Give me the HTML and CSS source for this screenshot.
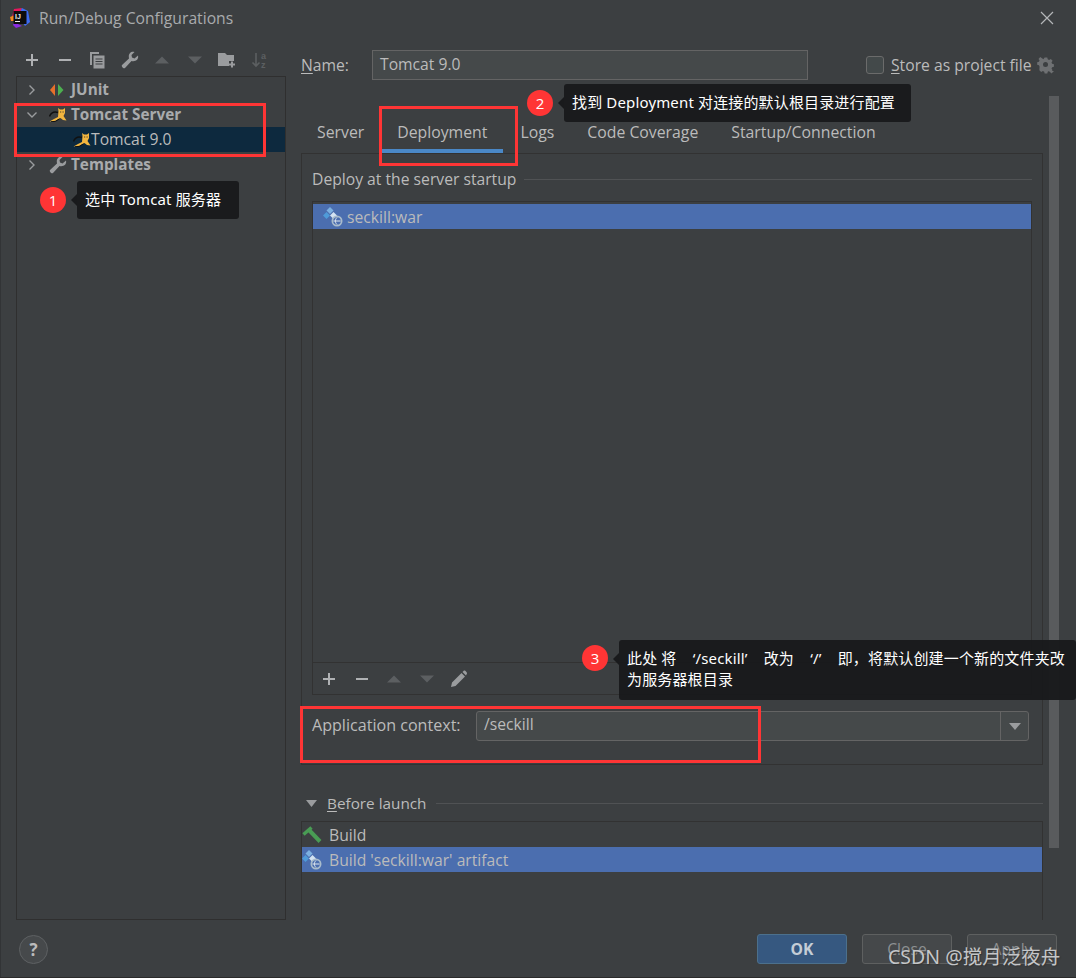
FILE: index.html
```html
<!DOCTYPE html>
<html lang="en">
<head>
<meta charset="utf-8">
<title>Run/Debug Configurations</title>
<link rel="stylesheet" href="styles.css">
</head>
<body>
<svg class="defs" width="0" height="0" aria-hidden="true">
  <defs>
    <symbol id="cat" viewBox="0 0 18 14">
      <path d="M0.500 8.500 C2 4.500 5 3 9.500 4.500" fill="none" stroke="#111" stroke-width="1.500"/>
      <path d="M0.500 13.500 L5 11 L9 9 L9.500 3 L9 0 L11 1.500 L14 1.500 L16 0 L16 5 L14.500 8 L17.500 12.500 L14 12 L11.500 10 L6 13Z" fill="#f3b63f"/>
      <path d="M2 13.800 L6.500 13.300 L10.500 10.800" fill="none" stroke="#111" stroke-width="1"/>
      <path d="M11.200 3.500h1v1h-1zM13.600 3.500h1v1h-1z" fill="#2a2a2a"/>
    </symbol>
    <symbol id="artifact" viewBox="0 0 20 20">
      <path d="M7 0 L10.500 3.500 L7 7 L3.500 3.500Z" fill="#7cb0e0"/>
      <path d="M3.500 5 L7 8.500 L3.500 12 L0 8.500Z" fill="#4f9bd9"/>
      <path d="M10.500 5 L14 8.500 L10.500 12 L7 8.500Z" fill="#d3e3f2"/>
      <circle cx="14" cy="14" r="5.500" fill="#a9bccc"/>
      <circle cx="14" cy="14" r="3.800" fill="#4b6eaf"/>
      <path d="M10.500 14h7M14 10.500c-2.200 2.200-2.200 4.800 0 7" fill="none" stroke="#dfe7ef" stroke-width="1"/>
    </symbol>
    <symbol id="plus" viewBox="0 0 14 14"><path d="M7 1v12M1 7h12" stroke="#afb1b3" stroke-width="2" fill="none"/></symbol>
    <symbol id="minus" viewBox="0 0 14 14"><path d="M1 7h12" stroke="#afb1b3" stroke-width="2" fill="none"/></symbol>
    <symbol id="up" viewBox="0 0 16 10"><path d="M8 1.500 L15 8.500H1Z" fill="#5c5f61"/></symbol>
    <symbol id="down" viewBox="0 0 16 10"><path d="M8 8.500 L15 1.500H1Z" fill="#5c5f61"/></symbol>
    <symbol id="wrench" viewBox="0 0 18 18"><path d="M17 4.500 L13.500 7.500 L11 6.500 L10.500 4 L13.500 1 C10.500 0 7.500 2 7.800 6 L8 7.500 L1 14 C0 15.500 2.500 18 4 17 L10.500 10 C14.500 11 18 8.500 17 4.500Z" fill="#9a9c9e"/></symbol>
    <symbol id="chev-r" viewBox="0 0 10 12"><path d="M2.500 1.500 L7 6 L2.500 10.500" fill="none" stroke="#9a9c9e" stroke-width="1.400"/></symbol>
    <symbol id="chev-d" viewBox="0 0 12 10"><path d="M1.500 2.500 L6 7 L10.500 2.500" fill="none" stroke="#9a9c9e" stroke-width="1.400"/></symbol>
  </defs>
</svg>

<main class="dialog">
  <header class="titlebar">
    <svg class="logo" width="20" height="20" viewBox="0 0 20 20">
      <path d="M4 1 L12 0 L8 10 L2 9Z" fill="#e8175d"/>
      <path d="M12 0 L18 3 L20 14 L15 18 L8 8Z" fill="#3d6bf0"/>
      <path d="M0 9 L5 7 L6 13 L1 13Z" fill="#f68b1f"/>
      <path d="M4 14 L12 18 L6 20 L3 17Z" fill="#8a2be2"/>
      <rect x="3.500" y="3" width="13" height="13" fill="#0d0d0d"/>
      <text x="5" y="10.500" class="logo-text">IJ</text>
      <rect x="5" y="13" width="5" height="1" fill="#eee"/>
    </svg>
    <span class="title">Run/Debug Configurations</span>
    <svg class="close" width="14" height="14" viewBox="0 0 14 14"><path d="M1 1 L13 13 M13 1 L1 13" stroke="#b4b6b8" stroke-width="1.200" fill="none"/></svg>
  </header>

  <div class="body">
    <aside class="side">
      <div class="toolbar">
        <svg width="14" height="14"><use href="#plus"/></svg>
        <svg width="14" height="14"><use href="#minus"/></svg>
        <svg width="16" height="18" viewBox="0 0 16 18"><path d="M1 1h9v2H3v11H1Z" fill="#9a9c9e"/><path d="M4.500 4.500h11v13h-11Z" fill="#9a9c9e"/><path d="M6.500 8h7M6.500 10.500h7M6.500 13h7" stroke="#3c3f41" stroke-width="1.200"/></svg>
        <svg width="18" height="18"><use href="#wrench"/></svg>
        <svg width="16" height="10"><use href="#up"/></svg>
        <svg width="16" height="10"><use href="#down"/></svg>
        <svg width="18" height="16" viewBox="0 0 18 16"><path d="M0 1h7l2 2h7v6h-5v5H0Z" fill="#9a9c9e"/><path d="M14 9.500v6M11 12.500h6" stroke="#9a9c9e" stroke-width="2"/></svg>
        <svg width="18" height="17" viewBox="0 0 18 17"><path d="M5 1v13M1.500 10.500 L5 14 L8.500 10.500" stroke="#5c5f61" stroke-width="1.600" fill="none"/><text x="10" y="7" class="sort-text">a</text><text x="10" y="16" class="sort-text">z</text></svg>
      </div>
      <div class="tree">
        <div class="tree-row"><svg class="arrow" width="10" height="12"><use href="#chev-r"/></svg>
          <svg class="tree-icon junit" width="16" height="14" viewBox="0 0 16 14"><path d="M6 1 L1 7 L6 13Z" fill="#e8702a"/><path d="M9 1 L14.500 7 L9 13Z" fill="#4caf50"/></svg>
          <b>JUnit</b></div>
        <div class="tree-row"><svg class="arrow" width="12" height="10"><use href="#chev-d"/></svg>
          <svg class="tree-icon" width="18" height="14"><use href="#cat"/></svg>
          <b>Tomcat Server</b></div>
        <div class="tree-row selected"><svg class="tree-icon child" width="18" height="14"><use href="#cat"/></svg>Tomcat 9.0</div>
        <div class="tree-row"><svg class="arrow" width="10" height="12"><use href="#chev-r"/></svg>
          <svg class="tree-icon" width="18" height="18"><use href="#wrench"/></svg>
          <b>Templates</b></div>
      </div>
    </aside>

    <section class="right">
      <div class="name-row">
        <label class="name-label"><u>N</u>ame:</label>
        <div class="name-input">Tomcat 9.0</div>
        <span class="checkbox"></span>
        <span class="store"><u>S</u>tore as project file</span>
        <svg class="gear" width="18" height="18" viewBox="0 0 18 18"><path d="M7 1h3l.5 2.200 1.500.7 2-1.200 2 2-1.200 2 .7 1.500 2 .5v3l-2 .5-.7 1.500 1.200 2-2 2-2-1.200-1.500.7-.5 2H7l-.5-2-1.500-.7-2 1.200-2-2L1.200 11.500.5 10 -1.500 9.500v-3L.5 6l.7-1.500L0 2.700l2-2 2 1.200L5.500 3.200Z" transform="translate(1.500 .5) scale(.88)" fill="#6e7072"/><circle cx="8.500" cy="8.500" r="2.500" fill="#3c3f41"/><path d="M12 15h5l-2.500 2.500Z" fill="#6e7072"/></svg>
      </div>

      <nav class="tabs">
        <span class="tab">Server</span>
        <span class="tab active">Deployment</span>
        <span class="tab">Logs</span>
        <span class="tab">Code Coverage</span>
        <span class="tab">Startup/Connection</span>
      </nav>

      <div class="panel">
        <div class="legend"><span>Deploy at the server startup</span><i class="rule"></i></div>
        <div class="deploy-list">
          <div class="list-body">
            <div class="list-row"><svg width="20" height="20"><use href="#artifact"/></svg><span>seckill:war</span></div>
          </div>
          <div class="list-tools">
            <svg width="14" height="14"><use href="#plus"/></svg>
            <svg width="14" height="14"><use href="#minus"/></svg>
            <svg width="16" height="10"><use href="#up"/></svg>
            <svg width="16" height="10"><use href="#down"/></svg>
            <svg width="18" height="18" viewBox="0 0 18 18"><path d="M1 17 L2 12.500 L11.500 3 L15 6.500 L5.500 16Z M12.500 2 L14 .5 C15 0 17.500 2.500 17 3.500 L16 5.500Z" fill="#9a9c9e"/></svg>
          </div>
        </div>
        <div class="context-row">
          <span class="context-label">Application context:</span>
          <div class="combo"><span class="combo-value">/seckill</span><span class="combo-btn"><svg width="12" height="7" viewBox="0 0 12 7"><path d="M0 0h12L6 7Z" fill="#9a9c9e"/></svg></span></div>
        </div>
      </div>

      <div class="legend launch"><svg width="11" height="7" viewBox="0 0 11 7"><path d="M0 0h11L5.500 7Z" fill="#9a9c9e"/></svg><span><u>B</u>efore launch</span><i class="rule"></i></div>
      <div class="launch-list">
        <div class="launch-row"><svg width="20" height="18" viewBox="0 0 20 18"><path d="M1.500 8.500 L9.500 1.500" stroke="#499c54" stroke-width="3.500" fill="none"/><path d="M7 4 L18 15.500" stroke="#499c54" stroke-width="4" fill="none"/></svg><span>Build</span></div>
        <div class="launch-row selected"><svg width="20" height="20"><use href="#artifact"/></svg><span>Build 'seckill:war' artifact</span></div>
      </div>
    </section>
    <div class="scrollbar"></div>
  </div>

  <footer class="footer">
    <span class="help">?</span>
    <div class="buttons">
      <span class="btn primary">OK</span>
      <span class="btn">Close</span>
      <span class="btn">Apply</span>
    </div>
  </footer>

  <div class="mark mark-1"></div>
  <div class="mark mark-2"></div>
  <div class="mark mark-3"></div>

  <div class="note note-1"><span class="badge">1</span><div class="tip">选中 Tomcat 服务器</div></div>
  <div class="note note-2"><span class="badge">2</span><div class="tip">找到 Deployment 对连接的默认根目录进行配置</div></div>
  <div class="note note-3"><span class="badge">3</span><div class="tip">此处 将 &nbsp;&nbsp;&nbsp;‘/seckill’ &nbsp;&nbsp;&nbsp;改为 &nbsp;&nbsp;&nbsp;‘/’ &nbsp;&nbsp;&nbsp;即，将默认创建一个新的文件夹改<br>为服务器根目录</div></div>

  <div class="watermark">CSDN @搅月泛夜舟</div>
</main>
</body>
</html>
```

FILE: styles.css
```css
* { box-sizing: border-box; }
html, body { margin: 0; padding: 0; }
body {
  background: #2b2b2b;
  font-family: "Open Sans", "Noto Sans CJK SC", sans-serif;
  font-size: 15.7px;
  color: #bbbbbb;
}
.defs { position: absolute; }
u { text-underline-offset: 2px; }
.dialog {
  position: relative;
  width: 1076px;
  height: 977px;
  background: #3c3f41;
  border-left: 1px solid #323436;
  overflow: hidden;
}

/* Title */
.titlebar {
  display: flex;
  align-items: center;
  height: 36px;
  padding: 0 22px 0 9px;
  gap: 9px;
}
.logo-text { font: 700 7px "Liberation Sans", sans-serif; fill: #eee; }
.sort-text { font: 700 9px "Liberation Sans", sans-serif; fill: #5c5f61; }
.title { font-size: 15.7px; color: #a9abad; padding-bottom: 1px; }
.close { margin-left: auto; }

/* Body */
.body { position: relative; display: flex; height: 884px; }
.side { display: flex; flex-direction: column; width: 270px; margin-left: 15px; flex: none; }
.toolbar {
  display: grid;
  grid-auto-flow: column;
  grid-auto-columns: 32.500px;
  justify-content: start;
  justify-items: center;
  align-items: center;
  height: 40px;
  padding-top: 8px;
}
.tree { flex: 1; border: 1px solid #2f2f2f; }
.tree-row { display: flex; align-items: center; height: 25px; padding-left: 9px; padding-bottom: 2px; white-space: nowrap; }
.tree-row svg { position: relative; top: 1px; }
.tree-row b { font-size: 15.300px; font-weight: 700; color: #a9abad; }
.tree-row.selected { background: #0d293e; }
.arrow { flex: none; width: 12px; }
.tree-icon { margin: 0 4px 0 11px; flex: none; }
.tree-icon.junit { margin-right: 6px; }
.tree-icon.child { margin: 0 0 0 47px; }

.right { width: 755px; margin-left: 15px; flex: none; }
.name-row { display: flex; align-items: center; height: 30px; margin-top: 14px; }
.name-label { width: 71px; }
.name-input {
  width: 436px;
  height: 30px;
  line-height: 27px;
  padding-left: 7px;
  background: #45494a;
  border: 1px solid #646464;
}
.checkbox {
  width: 18px;
  height: 18px;
  margin-left: 58px;
  border: 1px solid #6b6b6b;
  border-radius: 3px;
  background: #43494a;
}
.store { margin-left: 7px; white-space: nowrap; }
.gear { margin-left: 5px; flex: none; }

.tabs { display: flex; gap: 1px; height: 33px; margin-top: 40px; width: 742px; font-size: 15.800px; }
.tab { padding: 0 16px; height: 33px; line-height: 25px; white-space: nowrap; }
.tab.active { border-bottom: 4px solid #4a88c7; }

.panel {
  width: 742px;
  height: 612px;
  border: 1px solid #323232;
  padding: 0 10px;
}
.legend { display: flex; align-items: center; height: 20px; margin-top: 15px; gap: 8px; white-space: nowrap; }
.rule { flex: 1; height: 1px; background: #505254; }
.deploy-list {
  display: flex;
  flex-direction: column;
  height: 494px;
  margin-top: 12px;
  border: 1px solid #323232;
}
.list-body { flex: 1; padding-top: 2px; }
.list-row { display: flex; align-items: center; gap: 4px; height: 25px; padding-left: 10px; background: #4b6eaf; }
.list-tools {
  display: grid;
  grid-auto-flow: column;
  grid-auto-columns: 32.500px;
  justify-content: start;
  justify-items: center;
  align-items: center;
  height: 32px;
  border-top: 1px solid #323232;
}
.context-row { display: flex; align-items: center; margin-top: 16px; height: 30px; }
.context-label { width: 164px; padding-bottom: 2px; font-size: 16.100px; white-space: nowrap; }
.combo {
  display: flex;
  width: 553px;
  height: 30px;
  background: #45494a;
  border: 1px solid #646464;
  border-radius: 3px;
}
.combo-value { flex: 1; padding-left: 7px; line-height: 25px; }
.combo-btn { display: flex; align-items: center; justify-content: center; width: 28px; border-left: 1px solid #646464; }

.legend.launch { margin-top: 28px; padding-left: 5px; width: 742px; gap: 10px; font-size: 15.300px; }
.launch-list { width: 742px; height: 99px; margin-top: 8px; border: solid #323232; border-width: 1px 1px 0; }
.launch-row { display: flex; align-items: center; gap: 7px; height: 25px; }
.launch-row svg { flex: none; }
.launch-row.selected { background: #4b6eaf; }

.scrollbar { position: absolute; left: 1048px; top: 60px; width: 10px; height: 752px; background: #595b5d; }

/* Footer */
.footer { display: flex; align-items: center; justify-content: space-between; height: 55px; padding: 3px 19px 0 18px; }
.help {
  display: flex;
  align-items: center;
  justify-content: center;
  width: 29px;
  height: 29px;
  border-radius: 50%;
  background: #46494b;
  border: 1px solid #5e6163;
  font-weight: 700;
  font-size: 17px;
}
.buttons { display: flex; gap: 15px; }
.btn {
  display: flex;
  align-items: center;
  justify-content: center;
  width: 90px;
  height: 30px;
  border: 1px solid #5e6060;
  border-radius: 3px;
  background: #45484a;
  color: #8d9092;
}
.btn.primary { background: #365880; border-color: #4c708c; font-weight: 700; color: #c4cdd6; }

/* Annotations over the dialog */
.mark { position: absolute; border: 3px solid #ff3535; }
.mark-1 { left: 13px; top: 103px; width: 252px; height: 54px; }
.mark-2 { left: 378px; top: 106px; width: 139px; height: 60px; }
.mark-3 { left: 299px; top: 706px; width: 461px; height: 57px; }

.note { position: absolute; display: flex; align-items: center; gap: 11px; }
.note-1 { left: 39px; top: 181px; height: 38px; }
.note-2 { left: 526px; top: 84px; height: 38px; }
.note-3 { left: 581px; top: 640px; height: 60px; align-items: flex-start; }
.badge {
  flex: none;
  display: flex;
  align-items: center;
  justify-content: center;
  width: 26px;
  height: 26px;
  border-radius: 50%;
  background: #ff3535;
  color: #fff;
  font-size: 15px;
}
.note-3 .badge { margin-top: 5px; }
.tip {
  position: relative;
  padding: 0 16px 2px 8px;
  background: rgba(25, 26, 28, .97);
  border-radius: 3px;
  color: #fff;
  font-family: "Noto Sans", "Noto Sans CJK SC", sans-serif;
  font-size: 15px;
  letter-spacing: .15px;
  line-height: 21px;
  white-space: nowrap;
}
.note-1 .tip, .note-2 .tip { display: flex; align-items: center; height: 38px; }
.note-1 .tip { min-width: 162px; }
.note-3 .tip { width: 457px; height: 60px; padding: 8px 0 0 8px; }
.tip::before {
  content: "";
  position: absolute;
  left: -6px;
  top: 13px;
  border: 6px solid transparent;
  border-left: 0;
  border-right-color: #191a1c;
}
.watermark {
  position: absolute;
  left: 887px;
  top: 945px;
  font-family: "Noto Sans", "Noto Sans CJK SC", sans-serif;
  font-size: 19.500px;
  line-height: 24px;
  color: #c4c6c8;
  text-shadow: 1px 1px 1px #333;
  white-space: nowrap;
}
```
